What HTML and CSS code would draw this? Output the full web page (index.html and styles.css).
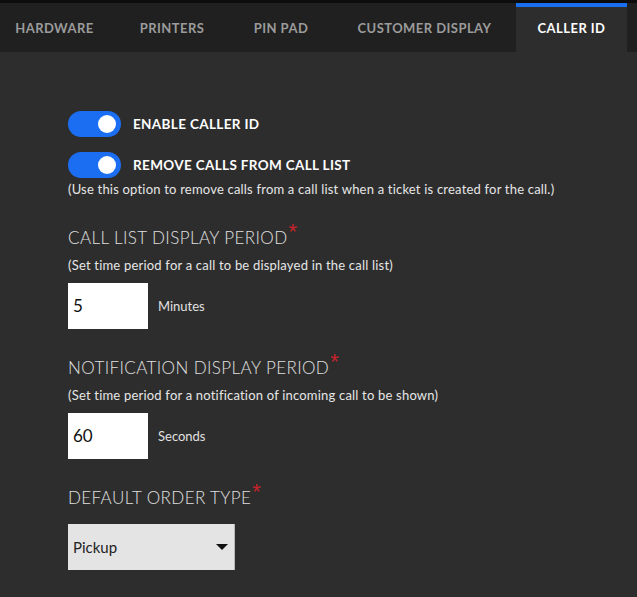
FILE: index.html
```html
<!DOCTYPE html>
<html lang="en">
<head>
<meta charset="utf-8">
<title>Caller ID</title>
<link rel="stylesheet" href="styles.css">
</head>
<body>
<div class="app">
  <nav class="tabs">
    <div class="tab tab-hardware">HARDWARE</div>
    <div class="tab tab-printers">PRINTERS</div>
    <div class="tab tab-pinpad">PIN PAD</div>
    <div class="tab tab-customer">CUSTOMER DISPLAY</div>
    <div class="tab tab-caller active">CALLER ID</div>
  </nav>
  <main class="content">
    <div class="toggle-row">
      <span class="toggle on"><span class="knob"></span></span>
      <span class="toggle-label">ENABLE CALLER ID</span>
    </div>
    <div class="toggle-row second">
      <span class="toggle on"><span class="knob"></span></span>
      <span class="toggle-label">REMOVE CALLS FROM CALL LIST</span>
    </div>
    <p class="help">(Use this option to remove calls from a call list when a ticket is created for the call.)</p>

    <h2 class="field-title">CALL LIST DISPLAY PERIOD<span class="req">*</span></h2>
    <p class="sub">(Set time period for a call to be displayed in the call list)</p>
    <div class="input-row">
      <div class="num-input">5</div>
      <span class="unit">Minutes</span>
    </div>

    <h2 class="field-title">NOTIFICATION DISPLAY PERIOD<span class="req">*</span></h2>
    <p class="sub">(Set time period for a notification of incoming call to be shown)</p>
    <div class="input-row">
      <div class="num-input">60</div>
      <span class="unit">Seconds</span>
    </div>

    <h2 class="field-title">DEFAULT ORDER TYPE<span class="req">*</span></h2>
    <div class="select">
      <span>Pickup</span>
      <span class="caret"></span>
    </div>
  </main>
</div>
</body>
</html>
```
FILE: styles.css
```css
* { box-sizing: border-box; }
html, body {
  margin: 0;
  padding: 0;
  background: #2d2d2d;
  font-family: "Lato", "Liberation Sans", sans-serif;
  color: #e6e6e6;
}
.app {
  width: 637px;
  height: 597px;
  overflow: hidden;
  background: #2d2d2d;
}
.tabs {
  display: flex;
  height: 52px;
  border-top: 3px solid #0c0c0c;
  background: #202020;
}
.tab {
  display: flex;
  align-items: center;
  justify-content: center;
  height: 49px;
  font-size: 13px;
  font-weight: 700;
  letter-spacing: 0.45px;
  color: #9b9b9b;
}
.tab-hardware { width: 115px; padding-right: 6px; }
.tab-printers { width: 114px; }
.tab-pinpad { width: 104px; }
.tab-customer { width: 183px; }
.tab-caller { width: 111px; }
.tab.active {
  background: #2d2d2d;
  color: #ffffff;
  border-top: 4px solid #1a6ff0;
  padding-bottom: 4px;
}
.content {
  padding: 59px 0 0 68px;
}
.toggle-row {
  display: flex;
  align-items: center;
  gap: 12px;
  height: 26px;
}
.toggle-row.second { margin-top: 15px; }
.toggle {
  display: flex;
  align-items: center;
  justify-content: flex-end;
  width: 53px;
  height: 26px;
  border-radius: 13px;
  background: #1b6ef2;
  padding-right: 5px;
}
.knob {
  width: 18px;
  height: 18px;
  border-radius: 50%;
  background: #ffffff;
}
.toggle-label {
  font-size: 13.5px;
  font-weight: 700;
  color: #ffffff;
  letter-spacing: 0.35px;
}
.help, .sub {
  margin: 0;
  font-size: 13px;
  line-height: 16px;
  letter-spacing: 0.2px;
  color: #e6e6e6;
}
.help { margin-top: 3px; }
.field-title {
  margin: 29px 0 0;
  font-size: 17px;
  font-weight: 300;
  line-height: 24px;
  color: #e0e0e0;
  letter-spacing: 0.4px;
}
.help + .field-title { margin-top: 29px; }
.input-row + .field-title { margin-top: 27px; }
.req {
  font-family: "Liberation Sans", sans-serif;
  color: #c8232c;
  font-size: 22px;
  font-weight: 400;
  vertical-align: 5px;
  line-height: 0;
  margin-left: 1px;
}
.sub { margin-top: 7px; }
.input-row {
  display: flex;
  align-items: center;
  gap: 10px;
  margin-top: 10px;
}
.num-input {
  width: 80px;
  height: 46px;
  background: #ffffff;
  color: #111111;
  font-size: 17px;
  line-height: 46px;
  padding-left: 5px;
}
.unit {
  font-size: 13px;
  color: #e0e0e0;
}
.field-title + .select { margin-top: 14px; }
.select {
  display: flex;
  align-items: center;
  justify-content: space-between;
  width: 167px;
  height: 46px;
  background: #e4e4e4;
  border-right: 1px solid #b8b8b8;
  padding: 0 6px 0 5px;
  color: #222222;
  font-size: 15px;
}
.caret {
  width: 0;
  height: 0;
  border-left: 6px solid transparent;
  border-right: 6px solid transparent;
  border-top: 6px solid #111111;
  margin-right: 0;
}
```
